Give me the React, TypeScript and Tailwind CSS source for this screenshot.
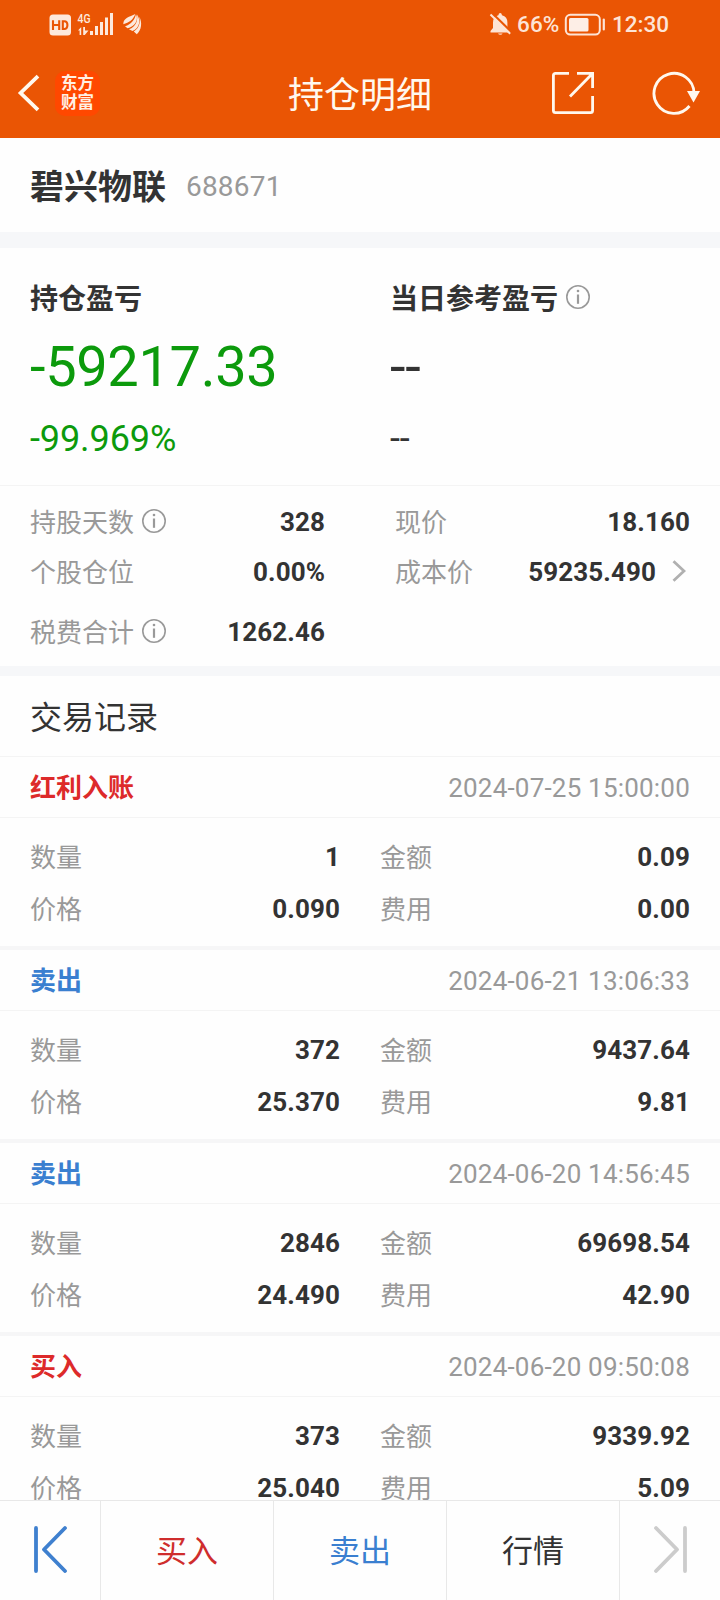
import type { ReactNode } from 'react';
import clsx from 'clsx';

type TradeRecord = {
  type: string;
  color: string;
  time: string;
  quantity: string;
  amount: string;
  price: string;
  fee: string;
};

const records: TradeRecord[] = [
  { type: '红利入账', color: 'text-[#dd2a2a]', time: '2024-07-25 15:00:00', quantity: '1', amount: '0.09', price: '0.090', fee: '0.00' },
  { type: '卖出', color: 'text-[#3a7fd0]', time: '2024-06-21 13:06:33', quantity: '372', amount: '9437.64', price: '25.370', fee: '9.81' },
  { type: '卖出', color: 'text-[#3a7fd0]', time: '2024-06-20 14:56:45', quantity: '2846', amount: '69698.54', price: '24.490', fee: '42.90' },
  { type: '买入', color: 'text-[#dd2a2a]', time: '2024-06-20 09:50:08', quantity: '373', amount: '9339.92', price: '25.040', fee: '5.09' },
];

const InfoIcon = () => (
  <svg className="mb-0.5 h-6 w-6 shrink-0" viewBox="0 0 24 24" fill="none" stroke="#999" strokeWidth="1.6">
    <circle cx="12" cy="12" r="11.2" />
    <path d="M12 9.5V18.8" strokeWidth="2.2" />
    <circle cx="12" cy="6" r="1.3" fill="#999" stroke="none" />
  </svg>
);

const StatusBar = () => (
  <div className="flex h-12 items-center justify-between pr-[49px] pl-[49px]">
    <svg className="h-12 w-24" viewBox="49 0 96 48" fill="#fde9dc">
      <rect x="49.5" y="14.5" width="21.5" height="21" rx="3.5" />
      <path d="M53 20.2V30M59.2 20.2V30M53 25H59.2M62.8 21.2V29H64.2Q67.4 29 67.4 25.1T64.2 21.2Z" fill="none" stroke="#ea5504" strokeWidth="2.1" />
      <text x="77.5" y="22.8" fontSize="13" fontWeight="500" textLength="13" lengthAdjust="spacingAndGlyphs">4G</text>
      <path d="M78 30.5L81.2 27V35H79.6V30.5ZM83.2 27H85V30.5H88.5L84.8 35H83.2Z" />
      <rect x="90" y="31" width="3" height="4" />
      <rect x="95" y="26" width="3" height="9" />
      <rect x="100" y="22" width="3" height="13" />
      <rect x="105" y="17.5" width="3" height="17.5" />
      <rect x="110" y="13" width="3" height="22" />
      <path d="M123.3 24.2C123.3 18 129.5 17 135.3 14.1C133.2 20 129 22.8 123.3 24.2Z" />
      <path d="M125 26.2C131.5 24.2 134.6 19.8 136 14.2C139 20 134.5 27 127.5 28.2Z" />
      <path d="M129 29.2C136 26.5 138 20.5 137 14.4C141 20 139.8 28 132.5 31Z" />
      <path d="M133.8 31.4C139.4 28 140.5 22.5 139.2 16.8C142.5 22 141.5 30.5 136.8 34.2Z" />
    </svg>
    <div className="flex h-12 items-center text-[22.5px] font-medium text-[#fde4d6]">
      <svg className="mr-1.5 h-12 w-[22px]" viewBox="489 0 22 48" fill="#fde4d6">
        <path d="M490.5 32.6V31L493 28V22.5Q493 16.6 498.4 15.2Q498.7 13 500.2 13T502 15.2Q507.4 16.6 507.4 22.5V28L510 31V32.6Z" />
        <path d="M498 33.4H502.6Q502 34.8 500.3 34.8T498 33.4Z" />
        <path d="M492 13L512 32.6" stroke="#ea5504" strokeWidth="2.2" />
        <path d="M490.5 14.5L510.2 33.8" stroke="#fde4d6" strokeWidth="2" />
      </svg>
      <span className="w-[47px] pt-0.5 tracking-[0.1px]">66%</span>
      <svg className="h-12 w-[41px]" viewBox="564 0 41 48" fill="none" stroke="#fde4d6">
        <rect x="565.8" y="14.8" width="34" height="19.8" rx="4.5" strokeWidth="2" />
        <rect x="569" y="18" width="19.5" height="13.4" rx="1.5" fill="#fdeee6" stroke="none" />
        <path d="M603.8 19.5V29.5" strokeWidth="2.2" strokeLinecap="round" />
      </svg>
      <span className="ml-[7px] w-[59px] pt-0.5 whitespace-nowrap">12:30</span>
    </div>
  </div>
);

const Header = () => (
  <header className="h-[138px] shrink-0 bg-[#ea5504] text-[#fff8ee]">
    <StatusBar />
    <div className="grid h-[90px] grid-cols-[1fr_auto_1fr] items-center">
      <div className="flex items-center">
        <svg className="ml-[17px] h-10 w-6" viewBox="0 0 24 40" fill="none" stroke="currentColor" strokeWidth="3.8">
          <path d="M21 3.2L3.6 20L21 36.8" />
        </svg>
        <div className="ml-[14px] flex h-[45px] w-[45px] flex-col items-center justify-center rounded-[10px] bg-[#ff4800] text-[16.5px] leading-[19px] font-bold text-[#fff0e4]">
          <span>东方</span>
          <span>财富</span>
        </div>
      </div>
      <h1 className="pt-1.5 text-[36px] leading-[44px]">持仓明细</h1>
      <div className="flex items-center justify-end">
        <svg className="h-11 w-11" viewBox="0 0 44 44" fill="none" stroke="currentColor" strokeWidth="2.8">
          <path d="M18 2.4H4.5Q2.4 2.4 2.4 4.5V39.5Q2.4 41.6 4.5 41.6H39.5Q41.6 41.6 41.6 39.5V25" />
          <path d="M26 2.4H41.6V17M41 3L19 25.5" />
        </svg>
        <svg className="mr-5 ml-[57px] h-11 w-12" viewBox="0 0 48 44" fill="none" stroke="currentColor" strokeWidth="2.8">
          <path d="M37.5 35A20 20 0 1 1 42 22" />
          <path d="M35 20H48L41.5 31.5Z" fill="currentColor" stroke="none" />
        </svg>
      </div>
    </div>
  </header>
);

const Stat = ({ label, value, info, arrow, className }: {
  label: string;
  value: string;
  info?: boolean;
  arrow?: boolean;
  className?: string;
}) => (
  <div className={clsx('flex items-center', className)}>
    <span className="mr-2 pt-0.5 text-[#999]">{label}</span>
    {info && <InfoIcon />}
    <span className="ml-auto font-bold tracking-[0.1px]">{value}</span>
    {arrow && (
      <svg className="mr-1 mb-0.5 ml-4 h-6 w-[14px]" viewBox="0 0 14 24" fill="none" stroke="#b0b0b0" strokeWidth="2.8">
        <path d="M1.5 2.2L12 12L1.5 21.8" />
      </svg>
    )}
  </div>
);

const RecordItem = ({ record }: { record: TradeRecord }) => (
  <div className="border-b-4 border-[#f6f6f7]">
    <div className="flex h-[61px] items-center justify-between border-b border-[#f4f4f4] px-[30px]">
      <span className={clsx('pt-[3px] font-bold', record.color)}>{record.type}</span>
      <span className="pt-0.5 tracking-[0.2px] text-[#999]">{record.time}</span>
    </div>
    <div className="grid h-32 grid-cols-[310px_310px] content-start gap-x-10 px-[30px] pt-[13px] leading-[50px]">
      <Stat label="数量" value={record.quantity} />
      <Stat label="金额" value={record.amount} />
      <Stat label="价格" value={record.price} />
      <Stat label="费用" value={record.fee} />
    </div>
  </div>
);

const NavCell = ({ className, children }: { className?: string; children: ReactNode }) => (
  <button className={clsx('flex items-center justify-center border-[#e8e8e8]', className)}>{children}</button>
);

export default function App() {
  return (
    <div className="flex h-[1600px] w-[720px] flex-col overflow-hidden bg-[#fefefe] font-[Roboto,'Noto_Sans_CJK_SC',sans-serif] text-[26px] text-[#333]">
      <Header />

      <section className="flex h-[110px] shrink-0 items-center border-b-16 border-[#f6f7f9] px-[30px] pt-1">
        <span className="text-[34px] leading-[44px] font-bold">碧兴物联</span>
        <span className="ml-5 text-[28px] tracking-[0.2px] text-[#999]">688671</span>
      </section>

      <section className="grid h-[238px] shrink-0 grid-cols-2 border-b border-[#f4f4f4] pt-8">
        <div className="pl-[30px]">
          <div className="text-[28px] leading-[40px] font-bold">持仓盈亏</div>
          <div className="mt-[11px] text-[56px] leading-[72px] tracking-[-0.35px] text-[#0c9a0c]">-59217.33</div>
          <div className="mt-3 text-[36px] leading-[48px] tracking-[-0.1px] text-[#0c9a0c]">-99.969%</div>
        </div>
        <div className="pl-[30px]">
          <div className="flex h-10 items-center text-[28px] leading-[40px] font-bold">
            <span className="mr-2">当日参考盈亏</span>
            <div className="mb-1"><InfoIcon /></div>
          </div>
          <div className="mt-[11px] text-[56px] leading-[72px] tracking-[-0.35px]">--</div>
          <div className="mt-3 text-[36px] leading-[48px] tracking-[-0.1px]">--</div>
        </div>
      </section>

      <section className="grid h-[190px] shrink-0 grid-cols-[295px_295px] auto-rows-min grid-rows-[50px_50px_60px] content-start gap-x-[70px] border-b-10 border-[#f6f7f9] px-[30px] pt-[11px] leading-[48px]">
        <Stat label="持股天数" value="328" info />
        <Stat label="现价" value="18.160" />
        <Stat label="个股仓位" value="0.00%" />
        <Stat label="成本价" value="59235.490" arrow />
        <Stat label="税费合计" value="1262.46" info className="pt-2.5" />
      </section>

      <h2 className="flex h-[81px] shrink-0 items-center border-b border-[#f4f4f4] px-[30px] pt-1 text-[32px]">交易记录</h2>

      <main className="min-h-0 flex-1 overflow-hidden">
        {records.map((record) => (
          <RecordItem key={record.time} record={record} />
        ))}
      </main>

      <nav className="grid h-[100px] shrink-0 grid-cols-[100px_173px_173px_173px_101px] border-t border-[#e8e8e8] text-[31px]">
        <NavCell>
          <svg className="mb-1 h-12 w-9" viewBox="0 0 36 48" fill="none" stroke="#3f80cf" strokeWidth="3.8" strokeLinecap="round" strokeLinejoin="round">
            <path d="M4 3V46M33 3L12 24.5L33 46" />
          </svg>
        </NavCell>
        <NavCell className="border-l pt-1 text-[#cf2d2d]">买入</NavCell>
        <NavCell className="border-l pt-1 text-[#3a7fd0]">卖出</NavCell>
        <NavCell className="border-l pt-1">行情</NavCell>
        <NavCell className="border-l">
          <svg className="mb-1 ml-0.5 h-12 w-9" viewBox="0 0 36 48" fill="none" stroke="#ccc" strokeWidth="3.8" strokeLinecap="round" strokeLinejoin="round">
            <path d="M32 3V46M3 3L24 24.5L3 46" />
          </svg>
        </NavCell>
      </nav>
    </div>
  );
}
